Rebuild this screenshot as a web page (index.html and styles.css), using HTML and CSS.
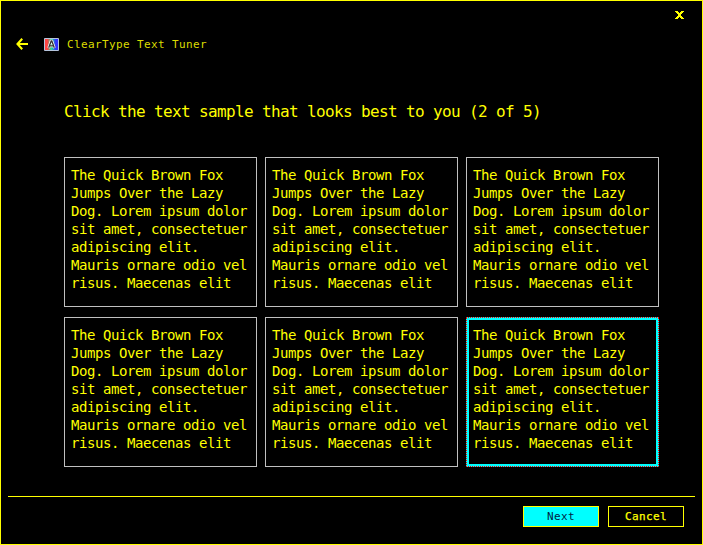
FILE: index.html
```
<!DOCTYPE html>
<html lang="en">
<head>
<meta charset="utf-8">
<title>ClearType Text Tuner</title>
<link rel="stylesheet" href="styles.css">
</head>
<body>
<main class="window">
  <div class="caption">
    <button class="close" aria-label="Close"><svg width="9" height="8" viewBox="0 0 9 8" shape-rendering="crispEdges"><path fill="#ff0" d="M0 0h3v1H0zM6 0h3v1H6zM1 1h3v1H1zM5 1h3v1H5zM2 2h5v1H2zM3 3h3v2H3zM2 5h5v1H2zM1 6h3v1H1zM5 6h3v1H5zM0 7h3v1H0zM6 7h3v1H6z"/></svg></button>
  </div>
  <header class="header">
    <button class="back" aria-label="Back"><svg width="12" height="12" viewBox="0 0 12 12"><path fill="none" stroke="#ff0" stroke-width="2.1" d="M6.2 .8 1.5 6l4.7 5.2M1 6H12"/></svg></button>
    <svg class="app-icon" width="15" height="13" viewBox="0 0 15 13">
      <defs><linearGradient id="spectrum"><stop offset=".2" stop-color="#f44"/><stop offset=".5" stop-color="#2d9"/><stop offset=".8" stop-color="#33f"/></linearGradient></defs>
      <path fill="url(#spectrum)" stroke="#b4c4dc" d="M.5 .5h14v12H.5z"/>
      <path fill="none" stroke="#fff" stroke-width="2.6" d="M4.6 10 7 3h1l2.4 7M5 8h5"/>
      <path fill="none" stroke="#333" stroke-width="1.3" d="M4.7 9.8 7.2 3h.6l2.5 6.8M5.5 7.8h4"/>
    </svg>
    <span class="title">ClearType Text Tuner</span>
  </header>
  <h1 class="heading">Click the text sample that looks best to you (2 of 5)</h1>
  <section class="samples">
    <div class="sample">The Quick Brown Fox<br>Jumps Over the Lazy<br>Dog. Lorem ipsum dolor<br>sit amet, consectetuer<br>adipiscing elit.<br>Mauris ornare odio vel<br>risus. Maecenas elit</div>
    <div class="sample">The Quick Brown Fox<br>Jumps Over the Lazy<br>Dog. Lorem ipsum dolor<br>sit amet, consectetuer<br>adipiscing elit.<br>Mauris ornare odio vel<br>risus. Maecenas elit</div>
    <div class="sample">The Quick Brown Fox<br>Jumps Over the Lazy<br>Dog. Lorem ipsum dolor<br>sit amet, consectetuer<br>adipiscing elit.<br>Mauris ornare odio vel<br>risus. Maecenas elit</div>
    <div class="sample">The Quick Brown Fox<br>Jumps Over the Lazy<br>Dog. Lorem ipsum dolor<br>sit amet, consectetuer<br>adipiscing elit.<br>Mauris ornare odio vel<br>risus. Maecenas elit</div>
    <div class="sample">The Quick Brown Fox<br>Jumps Over the Lazy<br>Dog. Lorem ipsum dolor<br>sit amet, consectetuer<br>adipiscing elit.<br>Mauris ornare odio vel<br>risus. Maecenas elit</div>
    <div class="sample selected">The Quick Brown Fox<br>Jumps Over the Lazy<br>Dog. Lorem ipsum dolor<br>sit amet, consectetuer<br>adipiscing elit.<br>Mauris ornare odio vel<br>risus. Maecenas elit</div>
  </section>
  <footer class="footer">
    <button class="btn primary">Next</button>
    <button class="btn">Cancel</button>
  </footer>
</main>
</body>
</html>
```
FILE: styles.css
```
* { box-sizing: border-box; }
body { margin: 0; background: #000; }
.window {
  width: 703px;
  height: 545px;
  border: 1px solid #ff0;
  background: #000;
  color: #ff0;
  font-family: "DejaVu Sans Mono", "Liberation Mono", monospace;
  display: flex;
  flex-direction: column;
  overflow: hidden;
}
button { margin: 0; padding: 0; border: 0; background: none; color: inherit; font-family: inherit; }
svg { display: block; }
.caption { display: flex; justify-content: flex-end; height: 30px; padding: 10px 18px 0 0; }
.close { height: 8px; }
.header { display: flex; align-items: center; height: 26px; padding-left: 15px; }
.app-icon { margin: 0 8px 0 16px; }
.title { padding-top: 1px; color: #dcdc00; font-size: 11px; letter-spacing: .378px; line-height: 17px; white-space: pre; }
.heading {
  margin: 43px 0 0 63px;
  font-size: 16px;
  font-weight: 400;
  letter-spacing: -.633px;
  line-height: 24px;
  white-space: pre;
}
.samples {
  display: grid;
  grid-template-columns: repeat(3, 193px);
  grid-auto-rows: 150px;
  gap: 10px 8px;
  margin: 33px 0 0 63px;
}
.sample {
  border: 1px solid #c0c0c0;
  padding: 8px 0 0 6px;
  font-size: 14px;
  letter-spacing: -.429px;
  line-height: 18px;
  white-space: nowrap;
}
.selected {
  border: 1px dotted #f00;
  background: linear-gradient(#000, #000) padding-box, #0ff border-box;
  box-shadow: inset 0 0 0 2px #0ff;
}
.footer {
  display: flex;
  justify-content: flex-end;
  gap: 9px;
  margin: 29px 7px 0;
  padding: 9px 11px 0 0;
  border-top: 1px solid #ff0;
}
.btn {
  width: 76px;
  height: 21px;
  border: 1px solid #ff0;
  font-size: 11px;
  letter-spacing: .378px;
  line-height: 19px;
  -webkit-text-stroke: .25px #ff0;
}
.primary { background: #0ff; color: #024; -webkit-text-stroke: 0; }
```
